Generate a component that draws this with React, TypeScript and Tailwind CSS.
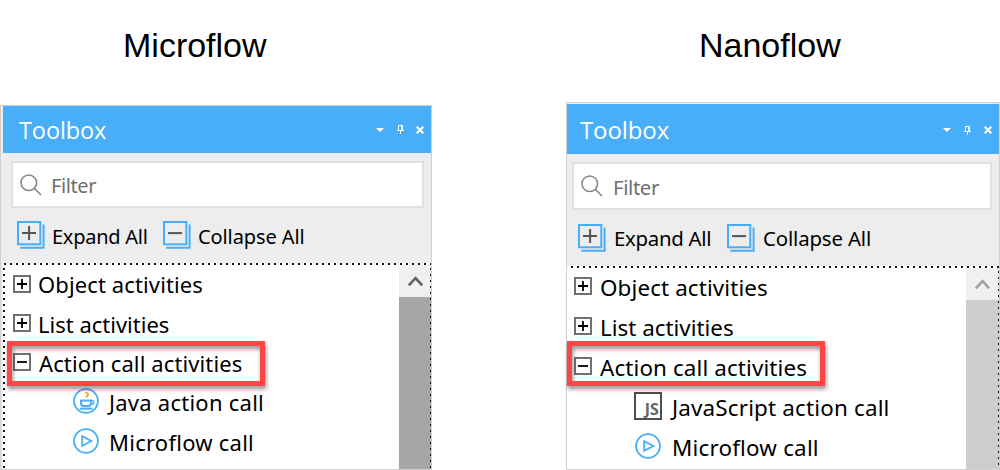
import React from "react";

const DOTS_X = "bg-[repeating-linear-gradient(90deg,#111_0_2px,transparent_2px_6px)]";
const DOTS_Y = "bg-[repeating-linear-gradient(180deg,#111_0_2px,transparent_2px_6px)]";

function Expander({ open }: { open?: boolean }) {
  return (
    <svg className="mb-[2px] h-[18px] w-[18px] shrink-0" viewBox="0 0 18 18">
      <rect x="1" y="1" width="16" height="16" fill="#fff" stroke="#707070" strokeWidth="2" />
      <path d={open ? "M4 9H14" : "M4 9H14M9 4V14"} stroke="#000" strokeWidth="1.8" />
    </svg>
  );
}

function StackIcon({ plus }: { plus?: boolean }) {
  return (
    <svg className="h-[28px] w-[28px] shrink-0" viewBox="0 0 28 28" fill="none">
      <rect x="1" y="1" width="22.3" height="22.3" stroke="#48aef7" strokeWidth="2" />
      <path d="M26.6 3.5V26.7H3.2" stroke="#48aef7" strokeWidth="2" />
      <path d={plus ? "M5 12.1H19M12.1 5V19" : "M5 12.1H19"} stroke="#555" strokeWidth="2" />
    </svg>
  );
}

function SearchIcon() {
  return (
    <svg className="h-[22px] w-[22px] shrink-0" viewBox="0 0 22 22" fill="none" stroke="#858585" strokeWidth="1.5">
      <circle cx="8.8" cy="8.8" r="7.8" />
      <path d="M14.4 14.4L21 21" />
    </svg>
  );
}

function PlayIcon() {
  return (
    <svg className="mb-[3px] h-[26px] w-[26px] shrink-0" viewBox="0 0 26 26" fill="none" stroke="#48aef7">
      <circle cx="13" cy="13" r="11.9" strokeWidth="1.8" />
      <path d="M9.2 8.2V17.8L18.4 13Z" strokeWidth="1.8" />
    </svg>
  );
}

function JavaIcon() {
  return (
    <svg className="mb-[3px] h-[26px] w-[26px] shrink-0" viewBox="0 0 26 26" fill="none">
      <circle cx="13" cy="13" r="11.9" stroke="#48aef7" strokeWidth="1.8" />
      <path d="M12.2 4.4C15.8 5.2 15.8 6.7 14 8C13.5 8.4 13.6 9 14.4 9.4" stroke="#f5a623" strokeWidth="1.9" />
      <path d="M8 12.4H18V15.2C18 17 17 18 15.3 18H10.7C9 18 8 17 8 15.2Z" stroke="#48aef7" strokeWidth="2" />
      <path d="M18 12.8H19.8C21.3 12.8 21.3 16 19.5 16H18" stroke="#48aef7" strokeWidth="1.5" />
      <path d="M7 20.6H19.5" stroke="#48aef7" strokeWidth="2" />
    </svg>
  );
}

function JsIcon() {
  return (
    <div className="mb-[3px] flex h-[28px] w-[28px] shrink-0 items-end justify-end border-2 border-[#4d4d4d] pr-[1px] text-[16px] leading-[17px] font-bold text-[#666]">
      JS
    </div>
  );
}

function Caret() {
  return (
    <svg className="h-[4px] w-[8px]" viewBox="0 0 8 4">
      <path d="M0 0H8L4 4Z" fill="#fff" />
    </svg>
  );
}

function Pin() {
  return (
    <svg className="h-[9px] w-[7px]" viewBox="0 0 7 9" fill="none" stroke="#fff">
      <path d="M1.5 5V.5H5.5V5M4.7 0V5M0 5.5H7M3.5 5.5V9" />
    </svg>
  );
}

function Close() {
  return (
    <svg className="h-[8px] w-[8px]" viewBox="0 0 8 8">
      <path d="M.7.7L7.3 7.3M7.3.7L.7 7.3" stroke="#fff" strokeWidth="2.1" />
    </svg>
  );
}

function ScrollArrow({ className }: { className: string }) {
  return (
    <svg className={"h-[11px] w-[15px] " + className} viewBox="0 0 15 11" fill="none" stroke="currentColor">
      <path d="M.8 9.3L7.5 2.2L14.2 9.3" strokeWidth="2.6" />
    </svg>
  );
}

function MicroflowPanel() {
  return (
    <div className="relative flex h-[365px] w-[432px] flex-col border border-[#d0d0d0] bg-[#ededed] pl-[2px]">
      <header className="flex h-[47px] shrink-0 items-center bg-[#48aef7] pl-4 text-white">
        <span className="mt-[2px] grow font-['Open_Sans'] text-[23.5px] leading-[47px] tracking-[-0.1px]">Toolbox</span>
        <div className="mr-[7px] flex items-center">
          <Caret />
          <div className="ml-[13px]"><Pin /></div>
          <div className="ml-[12px]"><Close /></div>
        </div>
      </header>
      <div className="mt-[8px] ml-[8px] flex h-[47px] w-[413px] shrink-0 items-center border-2 border-[#e0e0e0] bg-white pl-[7px]">
        <SearchIcon />
        <span className="mt-[3px] ml-[9px] text-[20px] leading-[30px] tracking-[-0.4px] text-[#707070]">Filter</span>
      </div>
      <div className="mt-[8px] flex h-[40px] shrink-0 items-center pl-[14px] text-[20px] text-black">
        <div className="mb-[2px]"><StackIcon plus /></div>
        <span className="mt-[2px] ml-[7px] w-[111px] tracking-[-0.25px] whitespace-nowrap">Expand All</span>
        <div className="mb-[2px]"><StackIcon /></div>
        <span className="mt-[2px] ml-[7px] tracking-[-0.1px] whitespace-nowrap">Collapse All</span>
      </div>
      <div className="mt-[7px] flex grow flex-col bg-white">
        <div className={"ml-[1px] h-[2px] shrink-0 " + DOTS_X} />
        <div className="flex grow">
          <div className={"mt-[3px] w-[2px] " + DOTS_Y} />
          <div className="flex grow flex-col pl-[8px] text-[22px] tracking-[0.12px] text-black">
            <div className="flex h-[39.4px] items-center"><Expander /><span className="ml-[7px]">Object activities</span></div>
            <div className="flex h-[39.4px] items-center"><Expander /><span className="ml-[7px] tracking-normal">List activities</span></div>
            <div className="flex h-[39.4px] items-center"><Expander open /><span className="ml-[8px]">Action call activities</span></div>
            <div className="flex h-[39.4px] items-center pl-[60px]"><JavaIcon /><span className="ml-[10px] tracking-[0.25px]">Java action call</span></div>
            <div className="flex h-[39.4px] items-center pl-[60px]"><PlayIcon /><span className="ml-[10px] tracking-[0.25px]">Microflow call</span></div>
          </div>
          <div className="relative flex w-[32px] flex-col bg-[#a6a6a6]">
            <div className="flex h-[32px] items-center justify-center bg-[#f0f0f0]"><ScrollArrow className="text-[#606060]" /></div>
            <div className={"absolute top-[3px] right-0 bottom-0 w-[1px] " + DOTS_Y} />
          </div>
        </div>
      </div>
      <div className="absolute top-[235px] left-[6px] h-[45px] w-[258px] border-5 border-[#ff4545] drop-shadow-[1px_3px_2px_rgba(0,0,0,0.45)]" />
    </div>
  );
}

function NanoflowPanel() {
  return (
    <div className="relative flex h-[368px] w-[434px] flex-col border border-[#d0d0d0] bg-[#ededed]">
      <header className="mt-[1px] flex h-[50px] shrink-0 items-center bg-[#48aef7] pl-[13px] text-white">
        <span className="grow font-['Open_Sans'] text-[24px] leading-[47px] tracking-[-0.1px]">Toolbox</span>
        <div className="mt-[2px] mr-[7px] flex items-center">
          <Caret />
          <div className="ml-[13px]"><Pin /></div>
          <div className="ml-[13px]"><Close /></div>
        </div>
      </header>
      <div className="mt-[8px] ml-[5px] flex h-[48px] w-[420px] shrink-0 items-center border-2 border-[#e0e0e0] bg-white pl-[7px]">
        <SearchIcon />
        <span className="mt-[1px] ml-[10px] text-[20.4px] leading-[30px] tracking-[-0.4px] text-[#707070]">Filter</span>
      </div>
      <div className="mt-[8px] flex h-[40px] shrink-0 items-center pl-[11px] text-[20.4px] text-black">
        <div className="mb-[1px]"><StackIcon plus /></div>
        <span className="mt-[1px] ml-[8px] w-[113px] tracking-[-0.3px] whitespace-nowrap">Expand All</span>
        <div className="mb-[1px]"><StackIcon /></div>
        <span className="mt-[1px] ml-[8px] tracking-[-0.15px] whitespace-nowrap">Collapse All</span>
      </div>
      <div className="mt-[8px] flex grow flex-col bg-white">
        <div className={"ml-[4px] h-[2px] shrink-0 " + DOTS_X} />
        <div className="flex grow">
          <div className="-mt-[1px] flex grow flex-col pl-[7px] text-[22.4px] tracking-[0.12px] text-black">
            <div className="flex h-[40px] items-center"><Expander /><span className="mt-[2px] ml-[8px]">Object activities</span></div>
            <div className="flex h-[40px] items-center"><Expander /><span className="mt-[2px] ml-[8px] tracking-normal">List activities</span></div>
            <div className="flex h-[40px] items-center"><Expander open /><span className="mt-[2px] ml-[8px]">Action call activities</span></div>
            <div className="flex h-[40px] items-center pl-[60px]"><JsIcon /><span className="mt-[2px] ml-[10px] tracking-[0.18px]">JavaScript action call</span></div>
            <div className="flex h-[40px] items-center pl-[61px]"><PlayIcon /><span className="mt-[2px] ml-[11px] tracking-[0.2px]">Microflow call</span></div>
          </div>
          <div className="relative flex w-[33px] flex-col bg-[#cdcdcd]">
            <div className="flex h-[32px] items-center justify-center bg-[#f0f0f0]"><ScrollArrow className="text-[#a0a0a0]" /></div>
            <div className={"absolute top-[3px] right-0 bottom-0 w-[1px] " + DOTS_Y} />
          </div>
        </div>
      </div>
      <div className="absolute top-[238px] left-0 h-[45px] w-[258px] border-5 border-[#ff4545] drop-shadow-[1px_3px_2px_rgba(0,0,0,0.45)]" />
    </div>
  );
}

export default function App() {
  return (
    <div className="flex h-[470px] w-[1000px] justify-between overflow-hidden bg-white font-['Noto_Sans','Open_Sans',sans-serif]">
      <section className="flex flex-col justify-between">
        <h1 className="pt-[24px] pl-[123px] font-['Liberation_Sans',Arial,sans-serif] text-[34px] leading-[42px] text-black">Microflow</h1>
        <MicroflowPanel />
      </section>
      <section className="flex flex-col justify-between">
        <h1 className="pt-[24px] pl-[133px] font-['Liberation_Sans',Arial,sans-serif] text-[34px] leading-[42px] text-black">Nanoflow</h1>
        <NanoflowPanel />
      </section>
    </div>
  );
}
